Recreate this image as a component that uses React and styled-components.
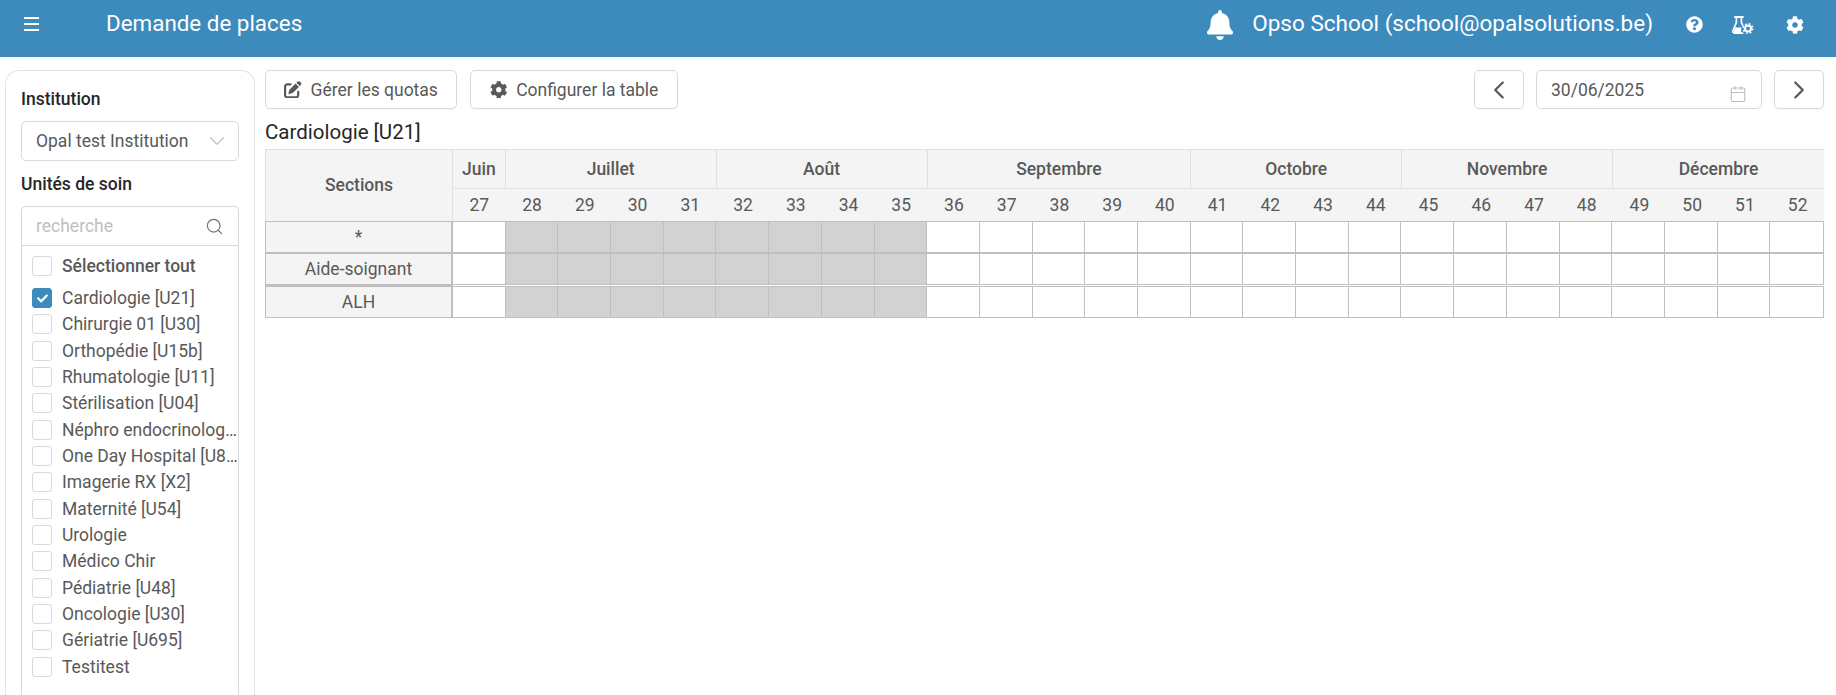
import React from 'react';
import styled, { createGlobalStyle } from 'styled-components';
import { FaBell, FaQuestionCircle, FaCog, FaCheck } from 'react-icons/fa';
import { FaPenToSquare } from 'react-icons/fa6';
import { LuChevronLeft, LuChevronRight, LuChevronDown, LuSearch, LuCalendar } from 'react-icons/lu';

const GlobalStyle = createGlobalStyle`
  html, body { margin: 0; padding: 0; background: #fff; height: 100%; overflow: hidden; }
  body { font-family: Roboto, "Liberation Sans", sans-serif; color: #595959; }
`;

const Page = styled.div`
  height: 695px;
  display: flex;
  flex-direction: column;
  overflow: hidden;
`;

const Header = styled.header`
  height: 57px;
  flex: none;
  background: #3d8bbc;
  color: #fff;
  display: flex;
  align-items: flex-start;
`;

const MenuButton = styled.div`
  width: 106px;
  padding: 17px 0 0 24px;
  box-sizing: border-box;
  display: flex;
`;

const Title = styled.div`
  flex: 1;
  font-size: 22.4px;
  line-height: 47px;
`;

const UserName = styled.div`
  font-size: 22.5px;
  line-height: 47px;
  margin: 0 33px 0 17px;
`;

const HeaderIcon = styled.div`
  display: flex;
  padding-top: ${p => p.$top || 16}px;
  margin-right: ${p => p.$gap || 0}px;
  font-size: ${p => p.$size || 17}px;
`;

const Body = styled.div`
  flex: 1;
  display: flex;
  min-height: 0;
  padding: 13px 12px 0 5px;
  gap: 10px;
`;

const Sidebar = styled.aside`
  width: 250px;
  box-sizing: border-box;
  flex: none;
  border: 1px solid #e4e4e4;
  border-bottom: 0;
  border-radius: 14px 14px 0 0;
  padding: 17px 15px 0;
  display: flex;
  flex-direction: column;
`;

const FieldLabel = styled.div`
  font-size: 17.5px;
  font-weight: 500;
  line-height: 22px;
  color: #262626;
`;

const SelectBox = styled.div`
  margin: 11px 0 12px;
  height: 40px;
  box-sizing: border-box;
  border: 1px solid #d9d9d9;
  border-radius: 5px;
  padding: 0 14px;
  display: flex;
  align-items: center;
  justify-content: space-between;
  font-size: 17.5px;
  svg { color: #bfbfbf; font-size: 26px; margin-right: -6px; stroke-width: 1; }
`;

const ListBox = styled.div`
  margin-top: 11px;
  flex: 1;
  border: 1px solid #d9d9d9;
  border-bottom: 0;
  border-radius: 5px 5px 0 0;
  min-height: 0;
  overflow: hidden;
`;

const SearchRow = styled.div`
  height: 38px;
  border-bottom: 1px solid #d9d9d9;
  padding: 0 14px;
  display: flex;
  align-items: center;
  justify-content: space-between;
  font-size: 17.5px;
  color: #bfbfbf;
  svg { color: #737373; font-size: 19px; stroke-width: 1.5; }
`;

const Options = styled.div`
  padding: 7px 0 0 10px;
`;

const Option = styled.div`
  height: 26.35px;
  display: flex;
  align-items: center;
  gap: 10px;
  font-size: 17.5px;
  font-weight: ${p => (p.$bold ? 500 : 400)};
  margin-bottom: ${p => (p.$bold ? 5.5 : 0)}px;
`;

const OptionText = styled.span`
  white-space: nowrap;
  overflow: hidden;
  text-overflow: ellipsis;
  min-width: 0;
  flex: 1;
`;

const Box = styled.span`
  width: 20px;
  height: 20px;
  flex: none;
  box-sizing: border-box;
  border-radius: 3px;
  border: 1px solid ${p => (p.$on ? '#3d8bbc' : '#d9d9d9')};
  background: ${p => (p.$on ? '#3d8bbc' : '#fff')};
  color: #fff;
  font-size: 11px;
  display: flex;
  align-items: center;
  justify-content: center;
`;

const Main = styled.main`
  flex: 1;
  min-width: 0;
`;

const Toolbar = styled.div`
  display: flex;
  align-items: center;
  gap: 13px;
`;

const NavGroup = styled.div`
  margin-left: auto;
  display: flex;
  gap: 12px;
`;

const Button = styled.div`
  width: ${p => p.$width}px;
  height: 39px;
  box-sizing: border-box;
  border: 1px solid #d9d9d9;
  border-radius: 5px;
  display: flex;
  align-items: center;
  justify-content: center;
  gap: 9px;
  font-size: ${p => p.$iconOnly ? 30 : 17.5}px;
  box-shadow: 0 2px 0 rgba(0, 0, 0, 0.02);
  ${p => p.$iconOnly && 'svg { stroke-width: 1.8; }'}
`;

const DateBox = styled.div`
  width: 226px;
  height: 39px;
  box-sizing: border-box;
  border: 1px solid #d9d9d9;
  border-radius: 5px;
  padding: 0 14px;
  display: flex;
  align-items: center;
  justify-content: space-between;
  font-size: 17.5px;
  svg { color: #bfbfbf; font-size: 18px; margin-top: 8px; stroke-width: 1.5; }
`;

const TableTitle = styled.div`
  font-size: 20.5px;
  line-height: 24px;
  color: #262626;
  margin: 11px 0 5px;
`;

const Grid = styled.div`
  display: grid;
  grid-template-columns: 188px repeat(26, 1fr);
  grid-template-rows: 40px 32px;
  text-align: center;
`;

const HeadCell = styled.div`
  background: #f4f4f4;
  border-top: ${p => (p.$top ? '1px solid #e0e0e0' : '0')};
  border-left: ${p => (p.$left ? '1px solid #e0e0e0' : '0')};
  border-right: ${p => (p.$right ? '1px solid #e0e0e0' : '0')};
  border-bottom: ${p => (p.$bottom ? '1px solid #e0e0e0' : '0')};
  grid-column: span ${p => p.$span || 1};
  grid-row: span ${p => p.$rows || 1};
  padding-bottom: ${p => (p.$rows ? 2 : 0)}px;
  font-size: 17.5px;
  font-weight: ${p => (p.$bold ? 500 : 400)};
  display: flex;
  align-items: center;
  justify-content: center;
  box-sizing: border-box;
  min-width: 0;
`;

const BodyRow = styled.div`
  display: grid;
  grid-template-columns: 188px repeat(26, 1fr);
  height: 32px;
  margin-top: ${p => (p.$detached ? 1 : 0)}px;
  border: 1px solid #bfbfbf;
  border-left: 0;
  box-sizing: border-box;
`;

const RowName = styled.div`
  background: #f4f4f4;
  border-left: 1px solid #bfbfbf;
  border-right: 2px solid #bfbfbf;
  font-size: 17.5px;
  display: flex;
  align-items: center;
  justify-content: center;
  ${p => p.$detached && 'box-shadow: 0 -2px 0 #bfbfbf;'}
`;

const WeekCell = styled.div`
  background: ${p => (p.$closed ? '#d2d2d2' : '#fff')};
  border-right: 1px solid #bfbfbf;
  &:last-child { border-right: 0; }
`;

const units = [
  'Cardiologie [U21]', 'Chirurgie 01 [U30]', 'Orthopédie [U15b]', 'Rhumatologie [U11]',
  'Stérilisation [U04]', 'Néphro endocrinologie [U12]', 'One Day Hospital [U80]', 'Imagerie RX [X2]',
  'Maternité [U54]', 'Urologie', 'Médico Chir', 'Pédiatrie [U48]',
  'Oncologie [U30]', 'Gériatrie [U695]', 'Testitest',
];

const months = [
  ['Juin', 1], ['Juillet', 4], ['Août', 4], ['Septembre', 5],
  ['Octobre', 4], ['Novembre', 4], ['Décembre', 4],
];

const weeks = Array.from({ length: 26 }, (_, i) => 27 + i);

const rows = [
  { name: '*' },
  { name: 'Aide-soignant' },
  { name: 'ALH', detached: true },
];

const MenuIcon = () => (
  <svg width="15" height="14" viewBox="0 0 15 14" stroke="#fff" strokeWidth="2">
    <path d="M0 1h15M0 7h15M0 13h15" />
  </svg>
);

// flask with a small gear, no icon package has this pair
const FlaskGear = () => (
  <svg width="22" height="18" viewBox="0 0 22 18" fill="none">
    <path d="M3 1h8" stroke="#fff" strokeWidth="1.8" strokeLinecap="round" />
    <path d="M4.4 1v5.5L1 14.6c-.5 1.3.2 2.5 1.6 2.5h8" stroke="#fff" strokeWidth="1.7" strokeLinejoin="round" strokeLinecap="round" />
    <path d="M9.4 1v5.5l1.4 3" stroke="#fff" strokeWidth="1.7" strokeLinecap="round" />
    <path d="M3 11.5h6.5l-.8 5.5H1.5z" fill="#fff" />
    <circle cx="16" cy="12.5" r="3" stroke="#fff" strokeWidth="2" />
    <circle cx="16" cy="12.5" r="4.8" stroke="#fff" strokeWidth="1.4" strokeDasharray="1.9 1.87" />
  </svg>
);

const App = () => {
  return (
    <Page>
      <GlobalStyle />
      <Header>
        <MenuButton><MenuIcon /></MenuButton>
        <Title>Demande de places</Title>
        <HeaderIcon $top={10} $size={30}><FaBell /></HeaderIcon>
        <UserName>Opso School (school@opalsolutions.be)</UserName>
        <HeaderIcon $gap={29}><FaQuestionCircle /></HeaderIcon>
        <HeaderIcon $gap={32}><FlaskGear /></HeaderIcon>
        <HeaderIcon $size={18} $top={16} $gap={32}><FaCog /></HeaderIcon>
      </Header>
      <Body>
        <Sidebar>
          <FieldLabel>Institution</FieldLabel>
          <SelectBox>
            Opal test Institution
            <LuChevronDown />
          </SelectBox>
          <FieldLabel>Unités de soin</FieldLabel>
          <ListBox>
            <SearchRow>
              recherche
              <LuSearch />
            </SearchRow>
            <Options>
              <Option $bold><Box /><OptionText>Sélectionner tout</OptionText></Option>
              {units.map((unit, i) => (
                <Option key={unit}>
                  <Box $on={i === 0}>{i === 0 && <FaCheck />}</Box>
                  <OptionText>{unit}</OptionText>
                </Option>
              ))}
            </Options>
          </ListBox>
        </Sidebar>
        <Main>
          <Toolbar>
            <Button $width={192}><FaPenToSquare />Gérer les quotas</Button>
            <Button $width={208}><FaCog />Configurer la table</Button>
            <NavGroup>
              <Button $width={50} $iconOnly><LuChevronLeft /></Button>
              <DateBox>30/06/2025<LuCalendar /></DateBox>
              <Button $width={50} $iconOnly><LuChevronRight /></Button>
            </NavGroup>
          </Toolbar>
          <TableTitle>Cardiologie [U21]</TableTitle>
          <Grid>
            <HeadCell $rows={2} $bold $top $left $right>Sections</HeadCell>
            {months.map(([name, span], i) => (
              <HeadCell key={name} $span={span} $bold $top $right={i < months.length - 1} $bottom>{name}</HeadCell>
            ))}
            {weeks.map(w => <HeadCell key={w}>{w}</HeadCell>)}
          </Grid>
          {rows.map(row => (
            <BodyRow key={row.name} $detached={row.detached}>
              <RowName $detached={row.detached}>{row.name}</RowName>
              {weeks.map(w => <WeekCell key={w} $closed={w >= 28 && w <= 35} />)}
            </BodyRow>
          ))}
        </Main>
      </Body>
    </Page>
  );
};

export default App;
